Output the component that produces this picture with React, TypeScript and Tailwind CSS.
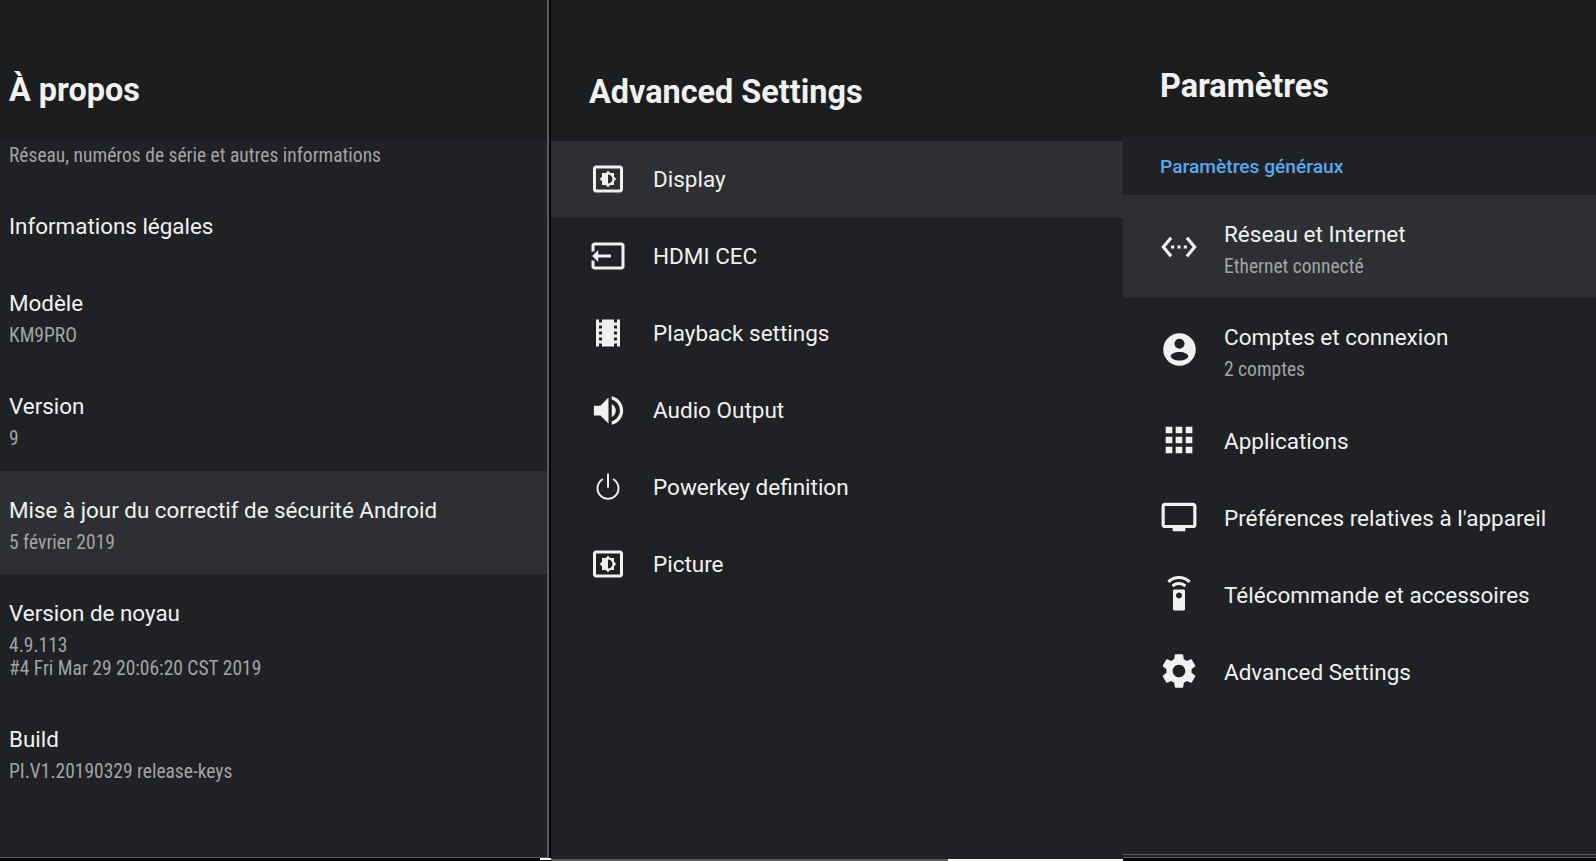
const ICONS: Record<string, string> = {
  display: 'M20 3H4c-1.1 0-2 .9-2 2v14c0 1.1.9 2 2 2h16c1.1 0 2-.9 2-2V5c0-1.1-.9-2-2-2zm0 16.01H4V4.99h16v14.02zM8 16h2.5l1.5 1.5 1.5-1.5H16v-2.5l1.5-1.5-1.5-1.5V8h-2.5L12 6.5 10.5 8H8v2.5L6.5 12 8 13.5V16zm4-7c1.66 0 3 1.34 3 3s-1.34 3-3 3V9z',
  hdmi: 'M21 3.01H3c-1.1 0-2 .9-2 2V9h2V4.99h18v14.03H3V15H1v4.01c0 1.1.9 1.98 2 1.98h18c1.1 0 2-.88 2-1.98v-14c0-1.11-.9-2-2-2zM1.5 12l4-4v3H14v2H5.5v3z',
  film: 'M18 3v2h-2V3H8v2H6V3H4v18h2v-2h2v2h8v-2h2v2h2V3h-2zM8 17H6v-2h2v2zm0-4H6v-2h2v2zm0-4H6V7h2v2zm10 8h-2v-2h2v2zm0-4h-2v-2h2v2zm0-4h-2V7h2v2z',
  audio: 'M3 9v6h4l5 5V4L7 9H3zm13.5 3c0-1.77-1.02-3.29-2.5-4.03v8.05c1.48-.73 2.5-2.25 2.5-4.02zM14 3.23v2.06c2.89.86 5 3.54 5 6.71s-2.11 5.85-5 6.71v2.06c4.01-.91 7-4.49 7-8.77s-2.99-7.86-7-8.77z',
  ethernet: 'M7.77 6.76L6.23 5.48.82 12l5.41 6.52 1.54-1.28L3.42 12l4.35-5.24zM7 13h2v-2H7v2zm10-2h-2v2h2v-2zm-6 2h2v-2h-2v2zm6.77-7.52l-1.54 1.28L20.58 12l-4.35 5.24 1.54 1.28L23.18 12l-5.41-6.52z',
  account: 'M12 2a10 10 0 1 0 0 20 10 10 0 0 0 0-20zm0 3.4a3.1 3.1 0 1 1 0 6.2 3.1 3.1 0 0 1 0-6.2zm0 8.1c2.9 0 5.4 1.2 5.4 2.6s-2.5 2.6-5.4 2.6-5.4-1.2-5.4-2.6 2.5-2.6 5.4-2.6z',
  apps: 'M4 8h4V4H4v4zm6 12h4v-4h-4v4zm-6 0h4v-4H4v4zm0-6h4v-4H4v4zm6 0h4v-4h-4v4zm6-10v4h4V4h-4zm-6 4h4V4h-4v4zm6 6h4v-4h-4v4zm0 6h4v-4h-4v4z',
  tv: 'M21 3H3c-1.1 0-2 .9-2 2v12c0 1.1.9 2 2 2h5v2h8v-2h5c1.1 0 2-.9 2-2V5c0-1.1-.9-2-2-2zm0 14H3V5h18v12z',
  remote: 'M15 9H9c-.55 0-1 .45-1 1v12c0 .55.45 1 1 1h6c.55 0 1-.45 1-1V10c0-.55-.45-1-1-1zm-3 6c-1.1 0-2-.9-2-2s.9-2 2-2 2 .9 2 2-.9 2-2 2zM7.05 6.05l1.41 1.41C9.37 6.56 10.62 6 12 6s2.63.56 3.54 1.46l1.41-1.41C15.68 4.78 13.93 4 12 4s-3.68.78-4.95 2.05zM12 0C8.96 0 6.21 1.23 4.22 3.22l1.41 1.41C7.26 3.01 9.51 2 12 2s4.74 1.01 6.36 2.64l1.41-1.41C17.79 1.23 15.04 0 12 0z',
  gear: 'M19.14 12.94c.04-.3.06-.61.06-.94 0-.32-.02-.64-.07-.94l2.03-1.58c.18-.14.23-.41.12-.61l-1.92-3.32c-.12-.22-.37-.29-.59-.22l-2.39.96c-.5-.38-1.03-.7-1.62-.94l-.36-2.54c-.04-.24-.24-.41-.48-.41h-3.84c-.24 0-.43.17-.47.41l-.36 2.54c-.59.24-1.13.57-1.62.94l-2.39-.96c-.22-.08-.47 0-.59.22L2.74 8.87c-.12.21-.08.47.12.61l2.03 1.58c-.05.3-.07.62-.07.94s.02.64.07.94l-2.03 1.58c-.18.14-.23.41-.12.61l1.92 3.32c.12.22.37.29.59.22l2.39-.96c.5.38 1.03.7 1.62.94l.36 2.54c.05.24.24.41.48.41h3.84c.24 0 .44-.17.47-.41l.36-2.54c.59-.24 1.13-.56 1.62-.94l2.39.96c.22.08.47 0 .59-.22l1.92-3.32c.12-.22.07-.47-.12-.61l-2.01-1.58zM12 15.6c-1.98 0-3.6-1.62-3.6-3.6s1.62-3.6 3.6-3.6 3.6 1.62 3.6 3.6-1.62 3.6-3.6 3.6z',
}

const ICON_SIZES: Record<string, string> = {
  display: 'w-9 h-9',
  hdmi: 'w-9 h-9',
  film: 'w-9 h-9',
  audio: 'w-[39px] h-[39px]',
  ethernet: 'w-[38px] h-[38px]',
  account: 'w-[39px] h-[39px]',
  apps: 'w-10 h-10',
  tv: 'w-[38px] h-[38px]',
  remote: 'w-9 h-9',
  gear: 'w-[42px] h-[42px]',
}

function Icon({ name }: { name: string }) {
  return (
    <div className="w-9 h-9 shrink-0 flex items-center justify-center">
      {name === 'power' ? (
        <svg viewBox="0 0 24 24" className="w-9 h-9 shrink-0 text-[#f1f1f1]" fill="none" stroke="currentColor" strokeWidth="1.3" strokeLinecap="round">
          <path d="M12 3.5v8.5" />
          <path d="M8.2 7a7 7 0 1 0 7.6 0" />
        </svg>
      ) : (
        <svg viewBox="0 0 24 24" className={`${ICON_SIZES[name]} shrink-0 text-[#f1f1f1]`} fill="currentColor" fillRule="evenodd">
          <path d={ICONS[name]} />
        </svg>
      )}
    </div>
  )
}

function Secondary({ children }: { children: React.ReactNode }) {
  return <p className="text-[19.5px] leading-[23px] text-[#a3a4a6] [font-stretch:87.5%]">{children}</p>
}

function AboutRow({ title, lines, active, tight }: { title: string; lines: string[]; active?: boolean; tight?: boolean }) {
  return (
    <div className={`h-[103px] pl-[9px] flex flex-col justify-center ${tight ? 'pt-[2px]' : 'pt-[4px]'} ${active ? 'bg-[#2e2f32]' : ''}`}>
      <p className="text-[22.4px] leading-[28px] text-[#f1f1f1] mb-[7px]">{title}</p>
      {lines.map((line) => (
        <Secondary key={line}>{line}</Secondary>
      ))}
    </div>
  )
}

function MenuRow({ icon, title, active }: { icon: string; title: string; active?: boolean }) {
  return (
    <div className={`h-[77px] pl-[39px] pb-[1px] flex items-center gap-[27px] ${active ? 'bg-[#2e2f32]' : ''}`}>
      <Icon name={icon} />
      <p className="text-[22.5px] leading-[28px] text-[#f1f1f1] mb-[1px]">{title}</p>
    </div>
  )
}

function SettingsRow({ icon, title, sub, active }: { icon: string; title: string; sub?: string; active?: boolean }) {
  return (
    <div className={`${sub ? 'h-[103px]' : 'h-[77px]'} pl-[38px] flex items-center gap-[27px] ${active ? 'bg-[#2e2f32]' : ''}`}>
      <Icon name={icon} />
      <div className={sub ? 'pt-[5px]' : 'pt-[2px]'}>
        <p className={`text-[22.5px] leading-[28px] text-[#f1f1f1] ${sub ? 'mb-[7.5px]' : ''}`}>{title}</p>
        {sub && <Secondary>{sub}</Secondary>}
      </div>
    </div>
  )
}

export default function App() {
  return (
    <div className="relative h-[861px] w-[1596px] overflow-hidden bg-[#050505] flex font-['Roboto',sans-serif]">
      {/* about */}
      <div className="w-[549px] h-[858px] bg-[#202124] border-r-2 border-b border-[#5a5b5e] flex flex-col overflow-hidden">
        <div className="h-[140px] shrink-0 bg-[#1c1d1f] pl-[9px] pt-[40px] flex items-center">
          <h1 className="text-[32.4px] font-bold text-[#f1f1f1]">À propos</h1>
        </div>
        <div className="h-[48px] pl-[9px] pt-[4px]">
          <Secondary>Réseau, numéros de série et autres informations</Secondary>
        </div>
        <div className="h-[77px] pl-[9px] pb-[2px] flex items-center">
          <p className="text-[22.4px] leading-[28px] text-[#f1f1f1]">Informations légales</p>
        </div>
        <AboutRow title="Modèle" lines={['KM9PRO']} tight />
        <AboutRow title="Version" lines={['9']} tight />
        <AboutRow title="Mise à jour du correctif de sécurité Android" lines={['5 février 2019']} active />
        <div className="h-[126px] pl-[9px] flex flex-col justify-center pt-[4px]">
          <p className="text-[22.4px] leading-[28px] text-[#f1f1f1] mb-[7px]">Version de noyau</p>
          <Secondary>4.9.113</Secondary>
          <Secondary>#4 Fri Mar 29 20:06:20 CST 2019</Secondary>
        </div>
        <AboutRow title="Build" lines={['PI.V1.20190329 release-keys']} />
      </div>

      {/* advanced settings */}
      <div className="ml-[2px] w-[572px] h-[861px] flex flex-col">
        <div className="h-[141px] shrink-0 bg-[#1c1d1f] pl-[38px] pt-[43px] flex items-center">
          <h1 className="text-[32.4px] font-bold text-[#f1f1f1]">Advanced Settings</h1>
        </div>
        <div className="flex-1 bg-[#202124]">
          <MenuRow icon="display" title="Display" active />
          <MenuRow icon="hdmi" title="HDMI CEC" />
          <MenuRow icon="film" title="Playback settings" />
          <MenuRow icon="audio" title="Audio Output" />
          <MenuRow icon="power" title="Powerkey definition" />
          <MenuRow icon="display" title="Picture" />
        </div>
        <div className="h-[2px] shrink-0 flex">
          <div className="w-[397px] bg-[#5a5b5e]" />
          <div className="flex-1 bg-white" />
        </div>
      </div>

      {/* settings */}
      <div className="flex-1 h-[861px] flex flex-col">
        <div className="h-[135px] shrink-0 bg-[#1c1d1f] pl-[37px] pt-[38px] flex items-center">
          <h1 className="text-[32.4px] font-bold text-[#f1f1f1]">Paramètres</h1>
        </div>
        <div className="flex-1 bg-[#202124] border-b border-[#5a5b5e]">
          <div className="h-[60px] pl-[37px] pt-[4px] flex items-center">
            <p className="text-[19.2px] font-medium text-[#5aa9f0]">Paramètres généraux</p>
          </div>
          <SettingsRow icon="ethernet" title="Réseau et Internet" sub="Ethernet connecté" active />
          <SettingsRow icon="account" title="Comptes et connexion" sub="2 comptes" />
          <SettingsRow icon="apps" title="Applications" />
          <SettingsRow icon="tv" title="Préférences relatives à l'appareil" />
          <SettingsRow icon="remote" title="Télécommande et accessoires" />
          <SettingsRow icon="gear" title="Advanced Settings" />
        </div>
        <div className="h-[3px] shrink-0 bg-[#202124] border-b border-[#5a5b5e]" />
        <div className="h-[3px] shrink-0 bg-[#050505]" />
      </div>

      <div className="absolute bottom-[1px] left-[540px] w-[11px] h-[2px] bg-white" />
    </div>
  )
}
